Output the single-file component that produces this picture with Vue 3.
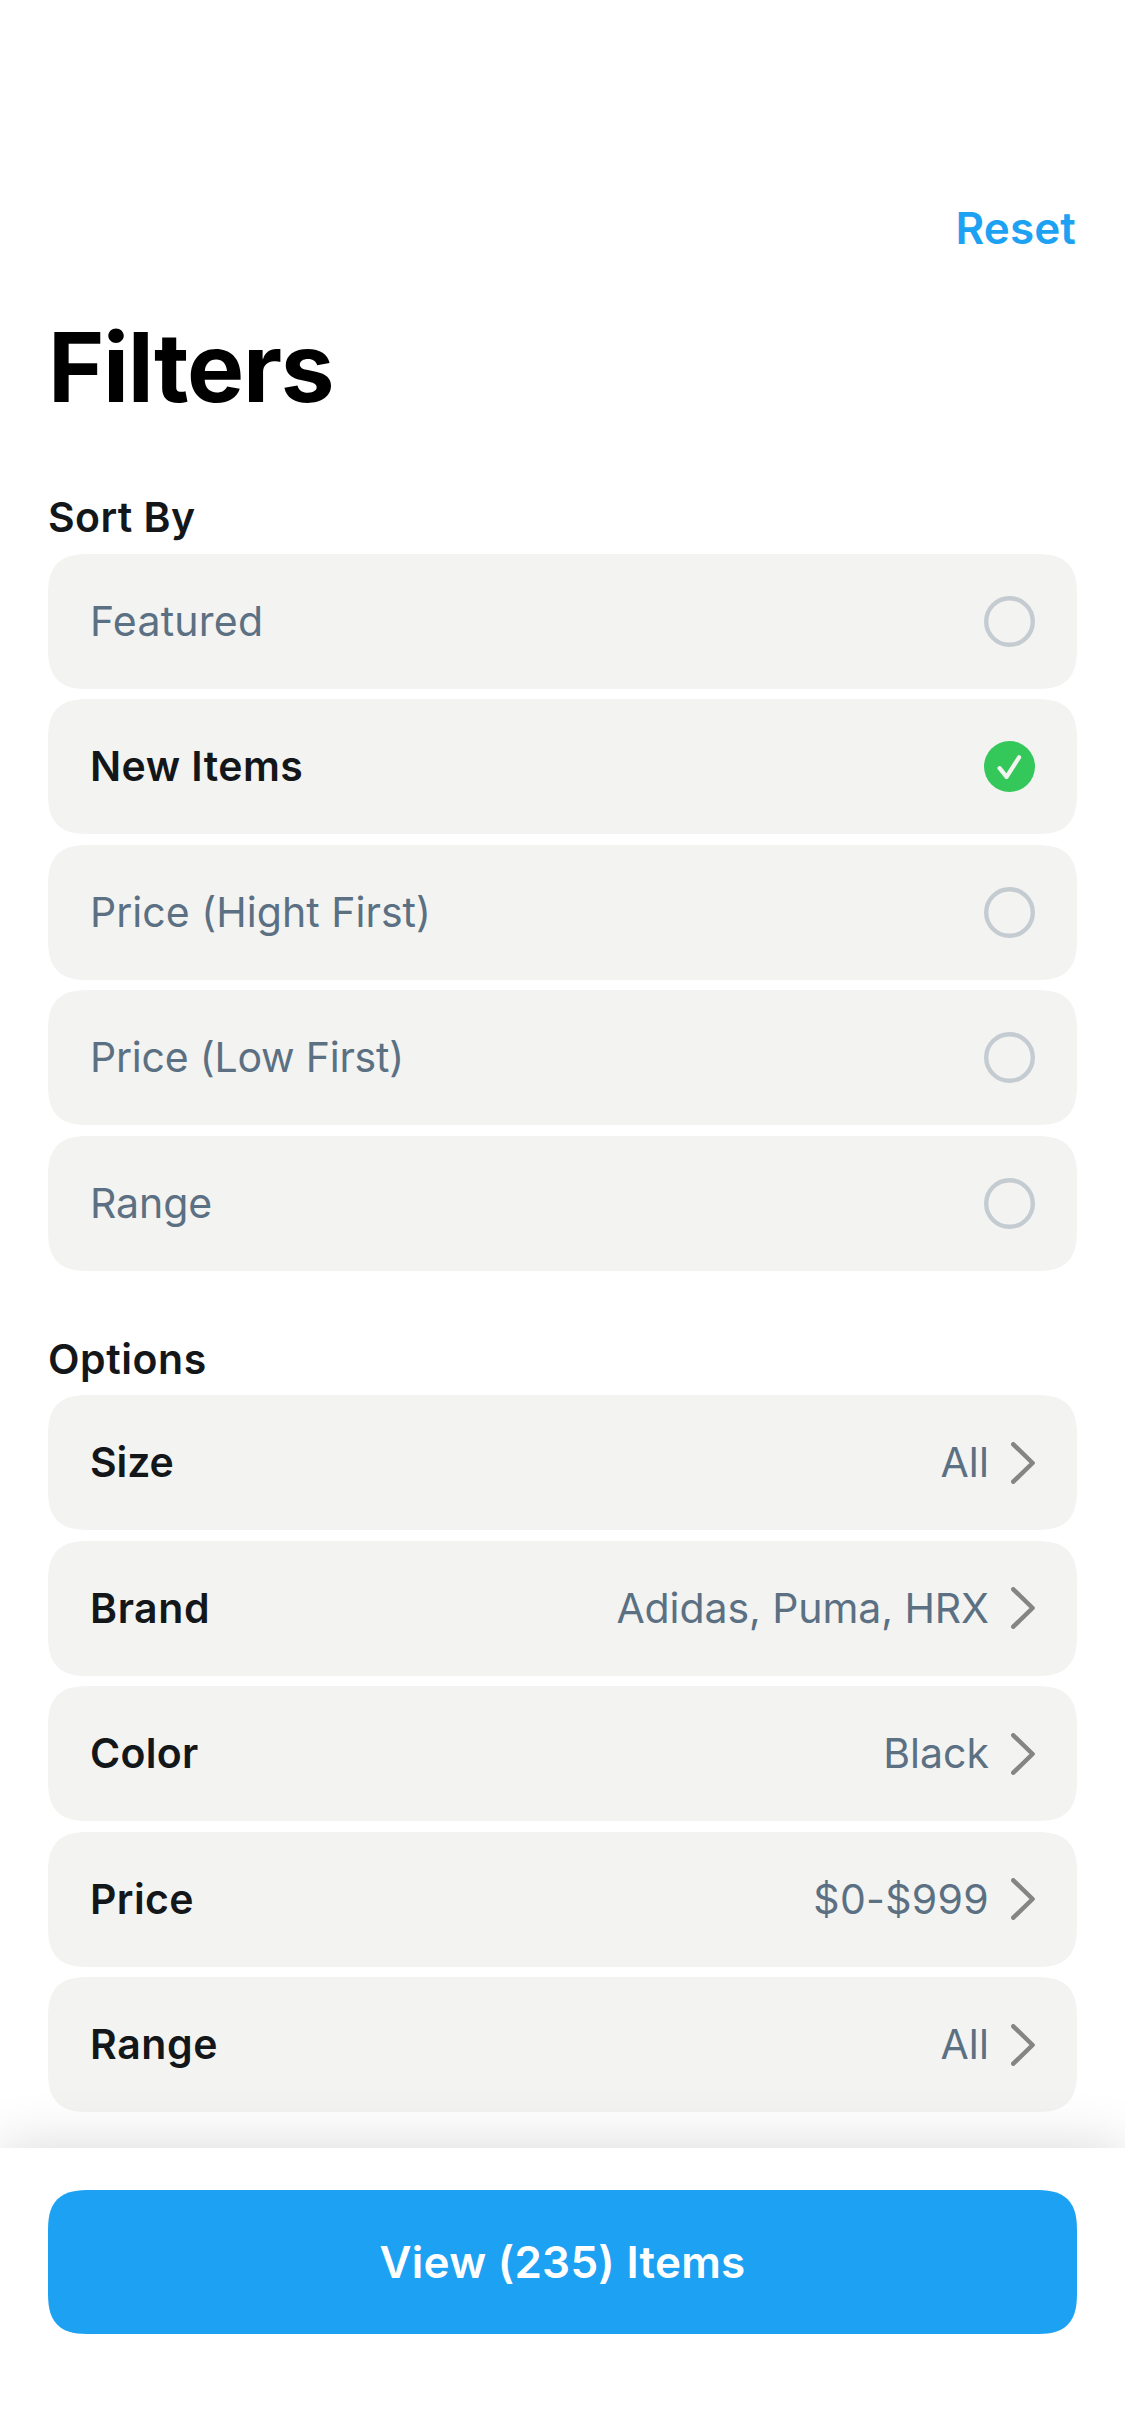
<script setup>
import { ref } from 'vue'

const sorts = [
  { label: 'Featured', tracking: 0.25 },
  { label: 'New Items', tracking: 0.45 },
  { label: 'Price (Hight First)', tracking: 0.04 },
  { label: 'Price (Low First)', tracking: -0.22 },
  { label: 'Range', tracking: -0.1 },
]
const selected = ref('New Items')

const options = [
  { label: 'Size', tracking: -0.1, value: 'All', valueTracking: 0.15 },
  { label: 'Brand', tracking: 0.6, value: 'Adidas, Puma, HRX', valueTracking: -0.08 },
  { label: 'Color', tracking: 0.28, value: 'Black', valueTracking: 0 },
  { label: 'Price', tracking: 0.39, value: '$0-$999', valueTracking: 0.3 },
  { label: 'Range', tracking: 0.6, value: 'All', valueTracking: 0.15 },
]
</script>

<template>
  <div class="screen">
    <main class="content">
      <header class="topbar">
        <button class="reset" type="button" @click="selected = 'Featured'">Reset</button>
      </header>
      <h1 class="title">Filters</h1>

      <section class="group">
        <h2 class="heading heading-sort">Sort By</h2>
        <div class="list">
          <div
            v-for="s in sorts"
            :key="s.label"
            class="row"
            :class="{ active: s.label === selected }"
            @click="selected = s.label"
          >
            <span class="label" :style="{ letterSpacing: s.tracking + 'px' }">{{ s.label }}</span>
            <svg v-if="s.label === selected" class="radio" viewBox="0 0 51 51">
              <circle cx="25.5" cy="25.5" r="25.5" fill="#34c759" />
              <path d="M15.6 27.2L22.6 35.8L35.1 16.3" fill="none" stroke="#f3f3f1" stroke-width="4.2" stroke-linecap="round" stroke-linejoin="round" />
            </svg>
            <svg v-else class="radio" viewBox="0 0 51 51">
              <circle cx="25.5" cy="25.5" r="23.3" fill="none" stroke="#c5ccd1" stroke-width="4.4" />
            </svg>
          </div>
        </div>
      </section>

      <section class="group options">
        <h2 class="heading heading-options">Options</h2>
        <div class="list">
          <div v-for="o in options" :key="o.label" class="row active">
            <span class="label" :style="{ letterSpacing: o.tracking + 'px' }">{{ o.label }}</span>
            <span class="value" :style="{ letterSpacing: o.valueTracking + 'px' }">{{ o.value }}</span>
            <svg class="chevron" viewBox="0 0 24 42">
              <path d="M2.3 2.3L21.6 21L2.3 39.7" fill="none" stroke="#858585" stroke-width="4.5" stroke-linecap="round" stroke-linejoin="round" />
            </svg>
          </div>
        </div>
      </section>
    </main>

    <footer class="footer">
      <button class="view" type="button">View (235) Items</button>
    </footer>
  </div>
</template>

<style>
body {
  background: #fff;
}
</style>

<style scoped>
.screen {
  box-sizing: border-box;
  width: 1125px;
  height: 2436px;
  display: flex;
  flex-direction: column;
  overflow: hidden;
  background: #fff;
  color: #14171a;
  font-family: Inter, "Liberation Sans", sans-serif;
}
.content {
  box-sizing: border-box;
  height: 2148px;
  flex: none;
  padding: 198px 48px 0;
}
button {
  border: 0;
  padding: 0;
  background: none;
  font-family: inherit;
  cursor: pointer;
}
.topbar {
  display: flex;
  justify-content: flex-end;
}
.reset {
  margin-right: 1px;
  color: #1da1f2;
  font-size: 44px;
  font-weight: 600;
  line-height: 60px;
  letter-spacing: 0.1px;
}
.title {
  margin: 51px 0 67px;
  color: #000;
  font-size: 96px;
  font-weight: 700;
  line-height: 116px;
  letter-spacing: -1.26px;
}
.heading {
  margin: 0;
  font-size: 41px;
  font-weight: 600;
  line-height: 50px;
}
.heading-sort {
  margin-bottom: 11.75px;
  letter-spacing: 0.4px;
}
.heading-options {
  margin-bottom: 11.25px;
  letter-spacing: 0.56px;
}
.options {
  margin-top: 63.25px;
}
.list {
  display: flex;
  flex-direction: column;
  gap: 10.5px;
}
.row {
  box-sizing: border-box;
  height: 135px;
  padding: 0 42px;
  display: flex;
  align-items: center;
  border-radius: 43px;
  corner-shape: superellipse(1.5);
  background: #f3f3f1;
  color: #5b7083;
  font-size: 41px;
  line-height: 50px;
}
.label,
.value {
  padding-bottom: 1px;
  white-space: nowrap;
}
.label {
  flex: 1;
}
.active .label {
  color: #14171a;
  font-weight: 600;
}
.value {
  margin-right: 22px;
}
.radio {
  width: 51px;
  height: 51px;
}
.chevron {
  width: 24px;
  height: 42px;
}
.footer {
  position: relative;
  box-sizing: border-box;
  flex: 1;
  padding: 42px 48px 0;
  background: #fff;
  box-shadow: 0 0 54px rgba(0, 0, 0, 0.155);
}
.view {
  display: block;
  width: 100%;
  height: 144px;
  border-radius: 43px;
  corner-shape: superellipse(1.5);
  background: #1da1f2;
  color: #fff;
  font-size: 44px;
  font-weight: 600;
  line-height: 60px;
  letter-spacing: 0.28px;
}
</style>
